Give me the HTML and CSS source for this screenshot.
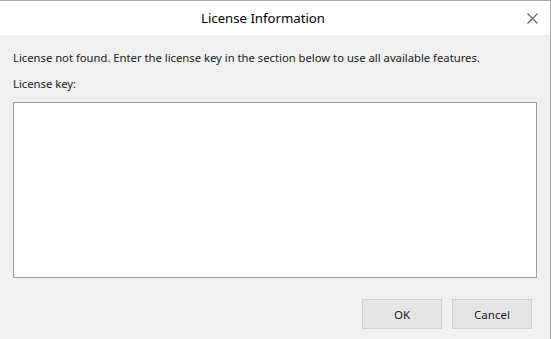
FILE: index.html
```html
<!DOCTYPE html>
<html>
<head>
<meta charset="utf-8">
<link rel="stylesheet" href="styles.css">
</head>
<body>
<div class="dialog">
  <div class="titlebar">
    <div class="title">License Information</div>
    <button class="close" aria-label="Close">
      <svg width="11" height="11" viewBox="0 0 11 11"><path d="M0.5 0.5L10.5 10.5M10.5 0.5L0.5 10.5" stroke="#6d6d6d" stroke-width="1.3" fill="none"/></svg>
    </button>
  </div>
  <div class="content">
    <p class="msg">License not found. Enter the license key in the section below to use all available features.</p>
    <p class="label">License key:</p>
    <textarea class="keybox"></textarea>
    <div class="buttons">
      <button class="btn">OK</button>
      <button class="btn">Cancel</button>
    </div>
  </div>
</div>
</body>
</html>
```
FILE: styles.css
```css
html, body {
  margin: 0;
  padding: 0;
  background: #f0f0f0;
}
.dialog {
  width: 550px;
  height: 338px;
  border-top: 1px solid #a8a8a8;
  border-right: 1px solid #a8a8a8;
  border-bottom: 1px solid #a8a8a8;
  background: #f0f0f0;
  display: flex;
  flex-direction: column;
  font-family: "Segoe UI", "Noto Sans", sans-serif;
  color: #1b1b1b;
}
.titlebar {
  height: 34px;
  background: #ffffff;
  display: flex;
  align-items: center;
  position: relative;
}
.title {
  flex: 1;
  text-align: center;
  font-size: 13.2px;
  padding-right: 24px;
  color: #000;
}
.close {
  position: absolute;
  right: 12px;
  top: 12px;
  width: 11px;
  height: 11px;
  padding: 0;
  border: 0;
  background: transparent;
  display: flex;
}
.content {
  flex: 1;
  display: flex;
  flex-direction: column;
  padding: 0 13px 0 13px;
}
.msg {
  margin: 15px 0 0 0;
  font-size: 11.25px;
  line-height: 16px;
}
.label {
  margin: 10px 0 0 0;
  font-size: 11.25px;
  line-height: 16px;
}
.keybox {
  margin: 10px 0 0 0;
  width: 524px;
  height: 176px;
  box-sizing: border-box;
  border: 1px solid #a0a0a0;
  background: #fff;
  resize: none;
  outline: none;
  padding: 0;
}
.buttons {
  display: flex;
  justify-content: flex-end;
  gap: 10px;
  margin-top: 21px;
  padding-right: 5px;
}
.btn {
  width: 80px;
  height: 30px;
  box-sizing: border-box;
  border: 1px solid #cfcfcf;
  background: #e5e5e5;
  font-family: "Segoe UI", "Noto Sans", sans-serif;
  font-size: 11.5px;
  color: #1b1b1b;
  padding: 0;
}
```
